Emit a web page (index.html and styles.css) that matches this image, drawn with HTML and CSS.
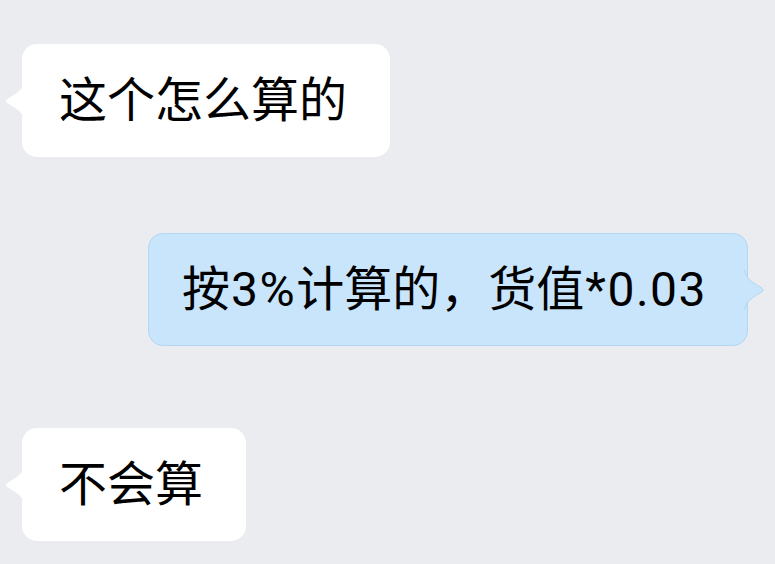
FILE: index.html
```html
<!DOCTYPE html>
<html lang="zh-CN">
<head>
  <meta charset="UTF-8" />
  <meta name="viewport" content="width=device-width, initial-scale=1.0" />
  <title>聊天</title>
  <link rel="stylesheet" href="styles.css">
</head>
<body>
  <div class="chat">
    <div class="row left first">
      <div class="bubble">
        <svg class="tail" width="22" height="40" viewBox="0 0 22 40"><path d="M22 0 C20 9 14 12 5 17.5 Q1 20 5 22.5 C14 28 20 31 22 40 Z" fill="#fff"/></svg>
        这个怎么算的
      </div>
    </div>

    <div class="row right second">
      <div class="bubble me">
        按<span class="num">3%</span>计算的，货值<span class="num">*0.03</span>
        <svg class="tail" width="22" height="40" viewBox="0 0 22 40"><path d="M0 0 C2 9 8 12 17 17.5 Q21 20 17 22.5 C8 28 2 31 0 40 Z" fill="#c8e5fc"/><path d="M0.5 0 C2 9 8 12 17 17.5 Q21 20 17 22.5 C8 28 2 31 0.5 40" fill="none" stroke="#b2d6f3" stroke-width="1"/></svg>
      </div>
    </div>

    <div class="row left third">
      <div class="bubble">
        <svg class="tail" width="22" height="40" viewBox="0 0 22 40"><path d="M22 0 C20 9 14 12 5 17.5 Q1 20 5 22.5 C14 28 20 31 22 40 Z" fill="#fff"/></svg>
        不会算
      </div>
    </div>
  </div>
</body>
</html>
```

FILE: styles.css
```css
body {
  margin: 0;
  background: #eaecf0;
  font-family: Roboto, "Noto Sans CJK SC", sans-serif;
  color: #000;
}

.chat {
  padding-top: 44px;
}

.row {
  display: flex;
}

.row.left {
  justify-content: flex-start;
  padding-left: 22px;
}

.row.right {
  justify-content: flex-end;
  padding-right: 27px;
}

.second {
  margin-top: 76px;
}

.third {
  margin-top: 82px;
}

.bubble {
  position: relative;
  height: 113px;
  box-sizing: border-box;
  display: flex;
  align-items: center;
  padding: 0 43px 0 37px;
  background: #fff;
  border-radius: 15px;
  font-size: 48px;
  line-height: 48px;
  white-space: nowrap;
}

.bubble.me {
  background: #c8e5fc;
  border: 1px solid #b2d6f3;
  padding: 0 40px 0 33px;
}

.num {
  letter-spacing: 1.5px;
  padding-left: 1px;
}

.tail {
  position: absolute;
  top: 50%;
  margin-top: -20px;
}

.left .tail {
  left: -19px;
}

.right .tail {
  right: -19px;
}
```
